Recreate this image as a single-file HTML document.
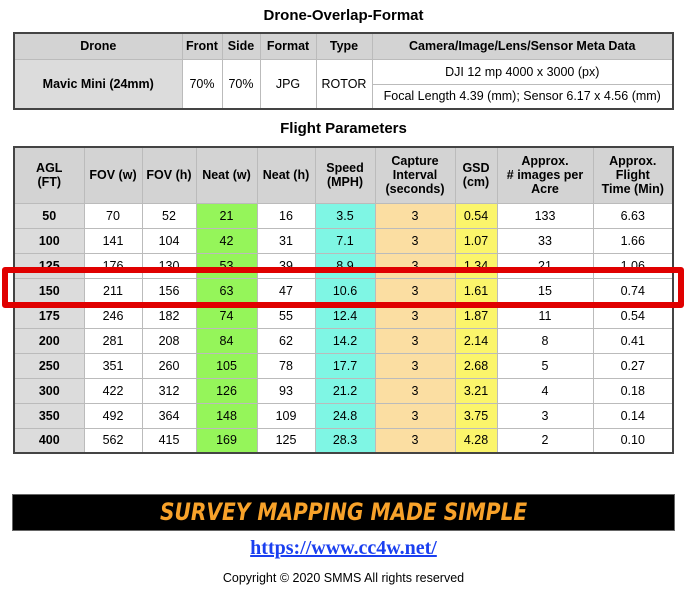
<!DOCTYPE html>
<html><head><meta charset="utf-8"><style>
*{margin:0;padding:0;box-sizing:border-box}
body{width:687px;height:592px;background:#fff;font-family:"Liberation Sans",Arial,sans-serif;position:relative;overflow:hidden;color:#000}
.t{position:absolute;left:0;width:687px;text-align:center;font-weight:bold;font-size:15px}
table{position:absolute;border-collapse:collapse;font-size:12.5px}
td,th{border:1px solid #bbb;text-align:center;padding:0}
th{background:#d3d3d3;font-weight:bold}
#t1{left:13px;top:32px;width:661px;border:2px solid #444}
#t2{left:13px;top:146px;width:661px;border:2px solid #444}
.a{background:#dcdcdc;font-weight:bold}
.g{background:#95f55a}.c{background:#7ff6e4}.o{background:#fbdea2}.y{background:#fbf56b}
#red{position:absolute;left:2px;top:267px;width:682px;height:41px;border:6px solid #e00000;border-radius:3px}
#ban{position:absolute;left:12px;top:494px;width:663px;height:37px;background:#000;border:1px solid #666;text-align:center;line-height:35px}
#ban span{display:inline-block;color:#f8a22a;font-family:"DejaVu Sans",sans-serif;font-weight:bold;font-style:italic;font-size:24px;transform:scaleX(0.84);white-space:nowrap}
a{position:absolute;left:0;width:687px;top:537px;text-align:center;font-family:"Liberation Serif",serif;font-weight:bold;font-size:20px;color:#1a3ff0;text-decoration:underline}
.cp{position:absolute;left:0;width:687px;top:571px;text-align:center;font-size:12.5px}
</style></head><body>
<div class="t" style="top:7px">Drone-Overlap-Format</div>
<table id="t1">
<colgroup><col style="width:168px"><col style="width:40px"><col style="width:38px"><col style="width:56px"><col style="width:56px"><col></colgroup>
<tr style="height:26px"><th>Drone</th><th>Front</th><th>Side</th><th>Format</th><th>Type</th><th>Camera/Image/Lens/Sensor Meta Data</th></tr>
<tr style="height:25px"><td rowspan="2" class="a">Mavic Mini (24mm)</td><td rowspan="2">70%</td><td rowspan="2">70%</td><td rowspan="2">JPG</td><td rowspan="2">ROTOR</td><td>DJI 12 mp 4000 x 3000 (px)</td></tr>
<tr style="height:25px"><td>Focal Length 4.39 (mm); Sensor 6.17 x 4.56 (mm)</td></tr>
</table>
<div class="t" style="top:120px">Flight Parameters</div>
<table id="t2">
<colgroup><col style="width:70px"><col style="width:58px"><col style="width:54px"><col style="width:61px"><col style="width:58px"><col style="width:60px"><col style="width:80px"><col style="width:42px"><col style="width:96px"><col></colgroup>
<tr style="height:56px"><th>AGL<br>(FT)</th><th>FOV (w)</th><th>FOV (h)</th><th>Neat (w)</th><th>Neat (h)</th><th>Speed<br>(MPH)</th><th>Capture<br>Interval<br>(seconds)</th><th>GSD<br>(cm)</th><th>Approx.<br># images per<br>Acre</th><th>Approx.<br>Flight<br>Time (Min)</th></tr>
<tr style="height:25px"><td class="a">50</td><td>70</td><td>52</td><td class="g">21</td><td>16</td><td class="c">3.5</td><td class="o">3</td><td class="y">0.54</td><td>133</td><td>6.63</td></tr>
<tr style="height:25px"><td class="a">100</td><td>141</td><td>104</td><td class="g">42</td><td>31</td><td class="c">7.1</td><td class="o">3</td><td class="y">1.07</td><td>33</td><td>1.66</td></tr>
<tr style="height:25px"><td class="a">125</td><td>176</td><td>130</td><td class="g">53</td><td>39</td><td class="c">8.9</td><td class="o">3</td><td class="y">1.34</td><td>21</td><td>1.06</td></tr>
<tr style="height:25px"><td class="a">150</td><td>211</td><td>156</td><td class="g">63</td><td>47</td><td class="c">10.6</td><td class="o">3</td><td class="y">1.61</td><td>15</td><td>0.74</td></tr>
<tr style="height:25px"><td class="a">175</td><td>246</td><td>182</td><td class="g">74</td><td>55</td><td class="c">12.4</td><td class="o">3</td><td class="y">1.87</td><td>11</td><td>0.54</td></tr>
<tr style="height:25px"><td class="a">200</td><td>281</td><td>208</td><td class="g">84</td><td>62</td><td class="c">14.2</td><td class="o">3</td><td class="y">2.14</td><td>8</td><td>0.41</td></tr>
<tr style="height:25px"><td class="a">250</td><td>351</td><td>260</td><td class="g">105</td><td>78</td><td class="c">17.7</td><td class="o">3</td><td class="y">2.68</td><td>5</td><td>0.27</td></tr>
<tr style="height:25px"><td class="a">300</td><td>422</td><td>312</td><td class="g">126</td><td>93</td><td class="c">21.2</td><td class="o">3</td><td class="y">3.21</td><td>4</td><td>0.18</td></tr>
<tr style="height:25px"><td class="a">350</td><td>492</td><td>364</td><td class="g">148</td><td>109</td><td class="c">24.8</td><td class="o">3</td><td class="y">3.75</td><td>3</td><td>0.14</td></tr>
<tr style="height:25px"><td class="a">400</td><td>562</td><td>415</td><td class="g">169</td><td>125</td><td class="c">28.3</td><td class="o">3</td><td class="y">4.28</td><td>2</td><td>0.10</td></tr>
</table>
<div id="red"></div>
<div id="ban"><span>SURVEY MAPPING MADE SIMPLE</span></div>
<a>https://www.cc4w.net/</a>
<div class="cp">Copyright © 2020 SMMS All rights reserved</div>
</body></html>
